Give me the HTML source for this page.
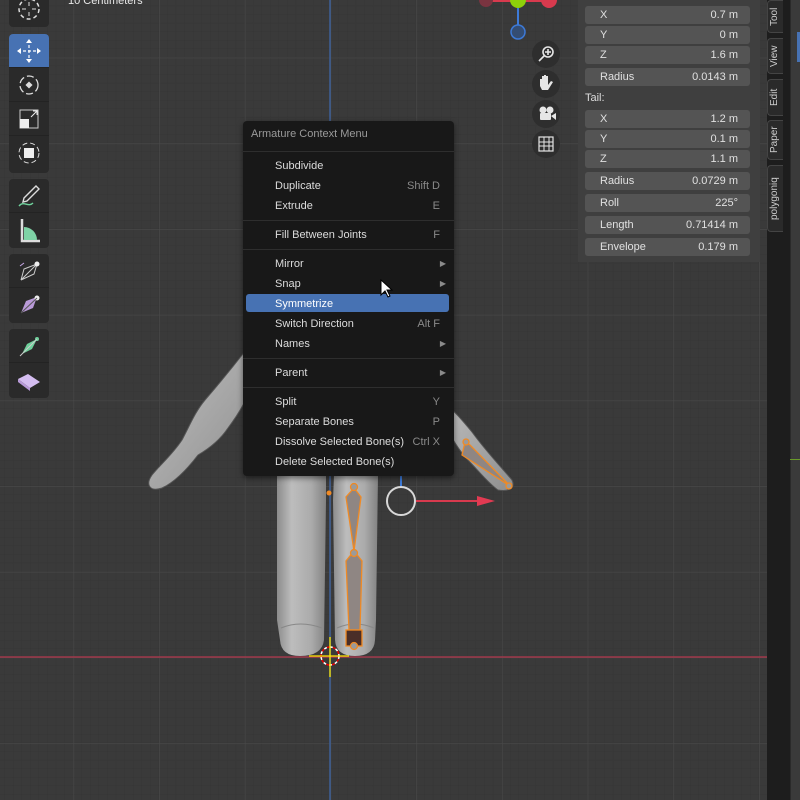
<!DOCTYPE html>
<html><head><meta charset="utf-8"><style>
*{margin:0;padding:0;box-sizing:border-box}
body{width:800px;height:800px;overflow:hidden;background:#3a3a3a;font-family:"Liberation Sans","DejaVu Sans",sans-serif;position:relative}
.abs{position:absolute}
.tb{position:absolute;left:9px;width:40px;background:#2a2a2a;border-radius:4px;overflow:hidden}
.btn{height:34px;border-bottom:1px solid #232323;display:flex;align-items:center;justify-content:center}
.menu{position:absolute;left:243px;top:121px;width:211px;height:355px;background:#181818;border-radius:4px;box-shadow:0 2px 6px rgba(0,0,0,.5);color:#dcdcdc;font-size:11px}
.mi{position:absolute;left:32px;height:18px;line-height:18px;top:1px}
.sc{position:absolute;right:14px;color:#8a8a8a;height:18px;line-height:18px;font-size:11px}
.ar{position:absolute;right:8px;color:#8a8a8a;font-size:8px;height:18px;line-height:18px}
.sep{position:absolute;left:0;right:0;height:1px;background:#2e2e2e}
.row{position:absolute;left:585px;width:165px;height:18px;background:#545454;border-radius:3px;color:#e0e0e0;font-size:11px;line-height:18px}
.row .l{position:absolute;left:15px}.row .v{position:absolute;right:12px}
.tab{position:absolute;left:767px;width:16px;border:1px solid #444;border-left:none;border-radius:0 4px 4px 0;color:#ccc;font-size:10px;writing-mode:vertical-rl;transform:rotate(180deg);text-align:center;line-height:14px;background:#2a2a2a}
</style></head><body>
<svg class="abs" style="left:0;top:0" width="800" height="800">
<defs><pattern id="mg" width="8.57" height="8.57" patternUnits="userSpaceOnUse" x="330" y="657"><path d="M0 0H8.57M0 0V8.57" stroke="#353535" stroke-width="1" fill="none"/></pattern>
<pattern id="Mg" width="85.7" height="85.7" patternUnits="userSpaceOnUse" x="330.5" y="657.5"><path d="M0 0H85.7M0 0V85.7" stroke="#4a4a4a" stroke-width="1.2" fill="none"/></pattern>
<linearGradient id="leg" x1="0" x2="1"><stop offset="0" stop-color="#8c8c8c"/><stop offset=".3" stop-color="#bdbdbd"/><stop offset=".7" stop-color="#ababab"/><stop offset="1" stop-color="#828282"/></linearGradient>
<linearGradient id="arm" x1="0" y1="0" x2="1" y2="1"><stop offset="0" stop-color="#c0c0c0"/><stop offset="1" stop-color="#8e8e8e"/></linearGradient>
</defs>
<rect width="800" height="800" fill="url(#mg)"/>
<rect width="800" height="800" fill="url(#Mg)"/>
<line x1="0" y1="657" x2="767" y2="657" stroke="#a0384a" stroke-width="1.5"/>
<line x1="330" y1="0" x2="330" y2="800" stroke="#3d5f98" stroke-width="1.5"/>
<!-- arms -->
<path d="M246 350 C232 368 218 385 205 400 C195 412 190 425 182 440 C172 455 160 465 152 475 C145 485 150 492 162 488 C175 482 188 468 198 455 C210 448 220 440 228 428 C240 412 250 395 256 375 Z" fill="url(#arm)" stroke="#555" stroke-width="1"/>
<path d="M438 400 C450 405 462 420 472 432 C485 450 500 466 512 480 C516 488 508 492 498 490 C488 483 478 470 466 458 C455 445 446 428 440 415 Z" fill="url(#arm)" stroke="#555" stroke-width="1"/>
<!-- legs -->
<path d="M277 475 H326 V500 L324 640 Q322 656 300 656 Q281 656 280 640 L277 620 Z" fill="url(#leg)"/>
<path d="M334 475 H378 L376 620 L375 640 Q374 656 355 656 Q336 656 335 640 L333 500 Z" fill="url(#leg)"/>
<path d="M281 628 Q300 620 322 628 M337 628 Q355 620 374 628" stroke="#888" fill="none"/>
<!-- bones -->
<g stroke="#f08a24" stroke-width="1.3" fill="#8f8683">
<path d="M354 488 L346 497 L354 551 L361 497 Z"/>
<path d="M354 551 L346 561 L349 630 L360 630 L362 561 Z"/>
<rect x="346" y="630" width="16" height="16" fill="#4a2e28"/>
<path d="M465 442 L470 445 L510 486 L462 455 Z"/>
</g>
<g fill="#9a9a9a" stroke="#f08a24" stroke-width="1.3"><circle cx="354" cy="487" r="3.5"/><circle cx="354" cy="553" r="3.5"/><circle cx="354" cy="646" r="3.5"/><circle cx="466" cy="442" r="3"/><circle cx="509" cy="486" r="3"/></g>
<circle cx="329" cy="493" r="2.5" fill="#f08a24"/>
<line x1="401" y1="476" x2="401" y2="487" stroke="#3d7ad8" stroke-width="2"/>
<circle cx="401" cy="501" r="14" fill="none" stroke="#d8d8d8" stroke-width="2"/>
<line x1="416" y1="501" x2="480" y2="501" stroke="#d83a4e" stroke-width="2"/>
<path d="M477 496 L495 501 L477 506 Z" fill="#e23a52"/>
<!-- 3d cursor -->
<circle cx="330" cy="656" r="9" fill="none" stroke="#fff" stroke-width="1.5" stroke-dasharray="3 3"/>
<circle cx="330" cy="656" r="9" fill="none" stroke="#e00" stroke-width="1.5" stroke-dasharray="3 3" stroke-dashoffset="3"/>
<path d="M309 656H349M330 637V677" stroke="#ffea00" stroke-width="1.3"/>
<!-- gizmo -->
<line x1="490" y1="1" x2="548" y2="1" stroke="#d83a4e" stroke-width="2"/>
<circle cx="486" cy="0" r="7" fill="#7a3440"/>
<circle cx="549" cy="0" r="8" fill="#d83a4e"/>
<line x1="518" y1="5" x2="518" y2="25" stroke="#3d7ad8" stroke-width="2"/>
<circle cx="518" cy="32" r="7" fill="#344d73" stroke="#3d7ad8" stroke-width="1.5"/>
<circle cx="518" cy="0" r="8" fill="#8ed00a"/>
<!-- nav buttons -->
<g fill="#2e2e2e"><circle cx="546" cy="54" r="14"/><circle cx="546" cy="84" r="14"/><circle cx="546" cy="114" r="14"/><circle cx="546" cy="144" r="14"/></g>
<g stroke="#e6e6e6" fill="none" stroke-width="1.6"><circle cx="548" cy="52" r="5"/><path d="M544 56l-5 5"/><path d="M548 49v6M545 52h6"/>
<rect x="539" y="137" width="14" height="14" stroke-width="1.2"/><path d="M539 142h14M539 146h14M544 137v14M549 137v14" stroke-width="1"/></g>
<path d="M540 86 v-7 h2 v5 v-8 h2 v8 v-9 h2 v9 v-8 h2 v9 l3-4 2 1-5 8 h-6 z" fill="#e6e6e6"/>
<g fill="#e6e6e6"><circle cx="543" cy="110" r="3.5"/><circle cx="550" cy="110" r="3.5"/><rect x="540" y="113" width="11" height="7" rx="1"/><path d="M551 116l5-3v7z"/></g>
</svg>

<!-- toolbar -->
<div class="tb" style="top:-6px;height:33px"><svg width="40" height="33"><circle cx="20" cy="15" r="10" fill="none" stroke="#ddd" stroke-width="1.5" stroke-dasharray="4 3"/><path d="M20 8v4M20 18v4M13 15h4M23 15h4" stroke="#ddd"/></svg></div>
<div class="tb" style="top:34px;height:139px">
<div class="btn" style="background:#4772b3"><svg width="30" height="30"><path d="M15 4v22M4 15h22" stroke="#fff" stroke-width="1.2" stroke-dasharray="3 2"/><path d="M15 3l-3 4h6zM15 27l-3-4h6zM3 15l4-3v6zM27 15l-4-3v6z" fill="#fff"/></svg></div>
<div class="btn"><svg width="30" height="30"><circle cx="15" cy="15" r="9" fill="none" stroke="#ddd" stroke-width="1.3" stroke-dasharray="7 3"/><rect x="12.5" y="12.5" width="5" height="5" fill="#ddd" transform="rotate(45 15 15)"/></svg></div>
<div class="btn"><svg width="30" height="30"><rect x="6" y="6" width="18" height="18" fill="none" stroke="#ccc"/><rect x="6" y="15" width="9" height="9" fill="#eee"/><path d="M17 13l6-6M19 7h4v4" stroke="#eee" fill="none"/></svg></div>
<div class="btn" style="border:none"><svg width="30" height="30"><circle cx="15" cy="15" r="10" fill="none" stroke="#ddd" stroke-dasharray="5 3"/><rect x="10" y="10" width="10" height="10" fill="#eee"/></svg></div>
</div>
<div class="tb" style="top:179px;height:69px">
<div class="btn"><svg width="30" height="30"><path d="M22 5l3 3-12 12-4 1 1-4z" fill="none" stroke="#ddd" stroke-width="1.4"/><path d="M5 25c5-6 9 2 14-3" stroke="#6fd19c" fill="none" stroke-width="1.4"/></svg></div>
<div class="btn" style="border:none"><svg width="30" height="30"><path d="M8 4v22h18" stroke="#ddd" stroke-width="2.5" fill="none"/><path d="M10 12a13 13 0 0 1 13 13H10z" fill="#7fd3a6"/></svg></div>
</div>
<div class="tb" style="top:254px;height:69px">
<div class="btn"><svg width="30" height="30"><path d="M7 24L23 8 20 18zM7 24l3-11 13-5" fill="none" stroke="#ccc"/><circle cx="23" cy="8" r="2.5" fill="#eee"/><path d="M6 10l4-3" stroke="#c6a6e6"/></svg></div>
<div class="btn" style="border:none"><svg width="30" height="30"><path d="M7 23l5-12 11-4-4 11z" fill="#b99ad8"/><circle cx="23" cy="8" r="2.5" fill="#eee"/><path d="M7 23L23 8" stroke="#555"/></svg></div>
</div>
<div class="tb" style="top:329px;height:69px">
<div class="btn"><svg width="30" height="30"><path d="M8 23l5-10 10-5-5 10z" fill="#6fd19c"/><circle cx="23" cy="8" r="2" fill="#6fd19c"/><path d="M6 25L23 8" stroke="#ccc"/></svg></div>
<div class="btn" style="border:none"><svg width="30" height="30"><path d="M4 14l10-5 12 8-10 6z" fill="#d4bdf0"/><path d="M4 14l12 9v3L4 17z" fill="#b89ad8"/></svg></div>
</div>
<div class="abs" style="left:68px;top:-5px;color:#e8e8e8;font-size:11px">10 Centimeters</div>

<!-- right panel -->
<div class="abs" style="left:578px;top:0;width:182px;height:262px;background:#3f3f3f"></div>
<div class="row" style="top:6px"><span class="l">X</span><span class="v">0.7 m</span></div>
<div class="row" style="top:26px"><span class="l">Y</span><span class="v">0 m</span></div>
<div class="row" style="top:46px"><span class="l">Z</span><span class="v">1.6 m</span></div>
<div class="row" style="top:68px"><span class="l">Radius</span><span class="v">0.0143 m</span></div>
<div class="abs" style="left:585px;top:92px;color:#ddd;font-size:11px">Tail:</div>
<div class="row" style="top:110px"><span class="l">X</span><span class="v">1.2 m</span></div>
<div class="row" style="top:130px"><span class="l">Y</span><span class="v">0.1 m</span></div>
<div class="row" style="top:150px"><span class="l">Z</span><span class="v">1.1 m</span></div>
<div class="row" style="top:172px"><span class="l">Radius</span><span class="v">0.0729 m</span></div>
<div class="row" style="top:194px"><span class="l">Roll</span><span class="v">225°</span></div>
<div class="row" style="top:216px"><span class="l">Length</span><span class="v">0.71414 m</span></div>
<div class="row" style="top:238px"><span class="l">Envelope</span><span class="v">0.179 m</span></div>
<div class="abs" style="left:767px;top:0;width:23px;height:800px;background:#1d1d1d"></div>
<div class="tab" style="top:0;height:33px">Tool</div>
<div class="tab" style="top:38px;height:36px">View</div>
<div class="tab" style="top:79px;height:37px">Edit</div>
<div class="tab" style="top:120px;height:40px">Paper</div>
<div class="tab" style="top:165px;height:67px">polygoniq</div>
<div class="abs" style="left:790px;top:0;width:10px;height:800px;background:#3a3a3a;border-left:1px solid #2a2a2a"></div>
<div class="abs" style="left:797px;top:32px;width:3px;height:30px;background:#4772b3"></div>
<div class="abs" style="left:790px;top:459px;width:10px;height:1px;background:#6a9a2a"></div>

<!-- menu -->
<div class="menu">
<div class="abs" style="left:8px;top:7px;color:#9a9a9a;font-size:11px">Armature Context Menu</div>
<div class="sep" style="top:30px"></div>
<div class="abs" style="left:0;top:1px;width:211px;height:355px">
<div class="mi" style="top:35px">Subdivide</div>
<div class="mi" style="top:55px">Duplicate</div><div class="sc" style="top:55px">Shift D</div>
<div class="mi" style="top:75px">Extrude</div><div class="sc" style="top:75px">E</div>
<div class="sep" style="top:98px"></div>
<div class="mi" style="top:104px">Fill Between Joints</div><div class="sc" style="top:104px">F</div>
<div class="sep" style="top:127px"></div>
<div class="mi" style="top:133px">Mirror</div><div class="ar" style="top:133px">▶</div>
<div class="mi" style="top:153px">Snap</div><div class="ar" style="top:153px">▶</div>
<div class="abs" style="left:3px;top:172px;width:203px;height:18px;background:#4772b3;border-radius:3px"></div>
<div class="mi" style="top:173px;color:#fff">Symmetrize</div>
<div class="mi" style="top:193px">Switch Direction</div><div class="sc" style="top:193px">Alt F</div>
<div class="mi" style="top:213px">Names</div><div class="ar" style="top:213px">▶</div>
<div class="sep" style="top:236px"></div>
<div class="mi" style="top:242px">Parent</div><div class="ar" style="top:242px">▶</div>
<div class="sep" style="top:265px"></div>
<div class="mi" style="top:271px">Split</div><div class="sc" style="top:271px">Y</div>
<div class="mi" style="top:291px">Separate Bones</div><div class="sc" style="top:291px">P</div>
<div class="mi" style="top:311px">Dissolve Selected Bone(s)</div><div class="sc" style="top:311px">Ctrl X</div>
<div class="mi" style="top:331px">Delete Selected Bone(s)</div>
</div>
</div>
<svg class="abs" style="left:380px;top:279px" width="14" height="20"><path d="M1 1v15l4-4 3 6 2-1-3-6h5z" fill="#fff" stroke="#000" stroke-width="1"/></svg>
</body></html>
